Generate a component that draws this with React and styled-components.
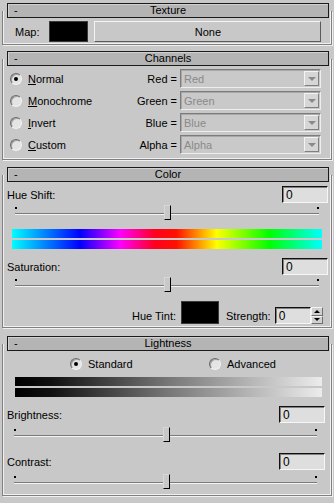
import React from "react";
import styled, { createGlobalStyle } from "styled-components";

const Global = createGlobalStyle`
  html, body {
    margin: 0;
    padding: 0;
    background: #c8c8c8;
  }
  body {
    font-family: "Liberation Sans", Arial, sans-serif;
    font-size: 11px;
    color: #000;
  }
  * { box-sizing: border-box; }
`;

// panel utama
const Page = styled.div`
  width: 334px;
  height: 503px;
  padding-top: 3px;
  background: #c8c8c8;
  overflow: hidden;
`;

const Rollout = styled.div`
  margin-top: ${(p) => p.$gap || 0}px;
`;

const Header = styled.div`
  position: relative;
  z-index: 1;
  height: 15px;
  margin: 0 5px 0 7px;
  border: 1px solid #1a1a1a;
  background: #b4b4b4;
  box-shadow: inset 1px 1px 0 #d0d0d0;
  display: flex;
  align-items: center;
  justify-content: center;
  line-height: 13px;
  font-size: 11px;
`;

const Minus = styled.span`
  position: absolute;
  left: 6px;
  top: 0;
`;

const Frame = styled.div`
  margin: -7px 2px 0 2px;
  padding: 7px 0 ${(p) => p.$pb || 0}px;
  border: 1px solid #808080;
  border-top: none;
  box-shadow: inset 1px 0 0 #f0f0f0, inset -1px -1px 0 #f0f0f0, 1px 1px 0 #f0f0f0;
`;

const Body = styled.div`
  padding: ${(p) => p.$pad || "0"};
`;

// baris map
const MapRow = styled.div`
  display: flex;
  align-items: center;
  height: 21px;
  padding-left: 12px;
`;

const Label = styled.span`
  white-space: nowrap;
  padding-bottom: ${(p) => p.$pb || 0}px;
  margin-left: ${(p) => p.$ml || 0}px;
`;

const Swatch = styled.div`
  width: ${(p) => p.$w}px;
  height: ${(p) => p.$h}px;
  background: #000;
  border: 1px solid #3a3a3a;
  margin-left: ${(p) => p.$ml || 0}px;
`;

const MapButton = styled.div`
  width: 227px;
  height: 21px;
  margin-left: 6px;
  background: #c8c8c8;
  border: 1px solid;
  border-color: #f4f4f4 #5a5a5a #5a5a5a #f4f4f4;
  display: flex;
  align-items: center;
  justify-content: center;
`;

// channels
const ChannelList = styled.div`
  display: flex;
  flex-direction: column;
  gap: 3px;
  padding: 3px 0 0;
`;

const ChannelRow = styled.div`
  display: flex;
  align-items: center;
  height: 19px;
  padding-left: 7px;
`;

const RadioWrap = styled.label`
  display: flex;
  align-items: center;
  gap: ${(p) => p.$gap || 6}px;
  width: ${(p) => (p.$w ? p.$w + "px" : "auto")};
  margin-left: ${(p) => p.$ml || 0}px;
  white-space: nowrap;
  u { text-decoration: underline; text-underline-offset: 1px; }
`;

const RadioDot = styled.span`
  width: 12px;
  height: 12px;
  border-radius: 50%;
  border: 1px solid;
  border-color: #6a6a6a #f2f2f2 #f2f2f2 #6a6a6a;
  background: #e4e4e4;
  box-shadow: inset 1px 1px 0 #a0a0a0;
  display: flex;
  align-items: center;
  justify-content: center;
  flex: none;
  &::after {
    content: "";
    width: 4px;
    height: 4px;
    border-radius: 50%;
    background: ${(p) => (p.$on ? "#000" : "transparent")};
  }
`;

const ChanLabel = styled.span`
  flex: 1;
  text-align: right;
  padding-right: 3px;
`;

const Dropdown = styled.div`
  width: 141px;
  height: 19px;
  margin-right: 10px;
  border: 1px solid;
  border-color: #7c7c7c #eeeeee #eeeeee #7c7c7c;
  box-shadow: inset 1px 1px 0 #a8a8a8;
  background: #c9c9c9;
  color: #8a8a8a;
  display: flex;
  align-items: center;
  justify-content: space-between;
  padding: 1px 1px 1px 3px;
`;

const DropArrow = styled.div`
  width: 15px;
  height: 15px;
  background: #d6d6d6;
  border: 1px solid;
  border-color: #f4f4f4 #808080 #808080 #f4f4f4;
  display: flex;
  align-items: center;
  justify-content: center;
  &::after {
    content: "";
    border-left: 4px solid transparent;
    border-right: 4px solid transparent;
    border-top: 4px solid #8a8a8a;
  }
`;

// baris label + angka
const FieldRow = styled.div`
  display: flex;
  align-items: center;
  justify-content: space-between;
  height: 17px;
  margin-top: ${(p) => p.$mt || 0}px;
  padding: 0 ${(p) => p.$pr || 4}px 0 4px;
`;

const NumBox = styled.div`
  width: ${(p) => p.$w || 46}px;
  height: ${(p) => p.$h || 17}px;
  border: 1px solid;
  border-color: #101010 #f6f6f6 #f6f6f6 #101010;
  box-shadow: inset 1px 1px 0 #808080;
  background: #dedede;
  padding-left: 3px;
  display: flex;
  align-items: center;
  font-size: 12px;
`;

const SliderWrap = styled.div`
  position: relative;
  height: ${(p) => p.$top + 8}px;
  padding-top: ${(p) => p.$top}px;
  margin: 0 ${(p) => p.$mr}px 0 ${(p) => p.$ml}px;
`;

const Track = styled.div`
  height: 2px;
  border-top: 1px solid #7a7a7a;
  border-bottom: 1px solid #f4f4f4;
`;

const Dot = styled.span`
  position: absolute;
  top: ${(p) => p.$top - 6}px;
  width: 2px;
  height: 2px;
  background: #000;
  ${(p) => (p.$right ? "right: 0;" : "left: 0;")}
`;

const Thumb = styled.span`
  position: absolute;
  top: ${(p) => p.$top - 8}px;
  width: 7px;
  height: 15px;
  margin-left: -3px;
  background: #c8c8c8;
  border: 1px solid;
  border-color: #d8d8d8 #000 #000 #d8d8d8;
`;

const Slider = ({ ml = 12, mr = 12, top = 10, value = 0.5 }) => (
  <SliderWrap $ml={ml} $mr={mr} $top={top}>
    <Dot $top={top} />
    <Dot $top={top} $right />
    <Track />
    <Thumb $top={top} style={{ left: `${value * 100}%` }} />
  </SliderWrap>
);

const GradBar = styled.div`
  height: ${(p) => p.$h}px;
  margin: ${(p) => p.$m};
  background: ${(p) => p.$bg};
`;

const hueGrad =
  "linear-gradient(to right, #00ffff 0%, #0000ff 22%, #ff00ff 35%, #ff0020 46%, #ff1000 53%, #ffff00 66%, #00ff00 83%, #00ffff 100%)";
const greyGrad = "linear-gradient(to right, #000 0%, #111 12%, #777 50%, #ececec 100%)";

const TintRow = styled.div`
  display: flex;
  align-items: flex-end;
  height: 23px;
  margin-top: 8px;
  padding-left: 129px;
`;

const Spinner = styled.div`
  display: flex;
  align-items: center;
  margin-left: 4px;
`;

const SpinBtns = styled.div`
  width: 12px;
  height: 17px;
  display: flex;
  flex-direction: column;
`;

const SpinBtn = styled.div`
  flex: 1;
  background: #d0d0d0;
  border: 1px solid;
  border-color: #f4f4f4 #707070 #707070 #f4f4f4;
  display: flex;
  align-items: center;
  justify-content: center;
  &::after {
    content: "";
    border-left: 3px solid transparent;
    border-right: 3px solid transparent;
    ${(p) => (p.$up ? "border-bottom: 3px solid #000;" : "border-top: 3px solid #000;")}
  }
`;

const ModeRow = styled.div`
  display: flex;
  align-items: center;
  height: 14px;
  margin-top: 6px;
`;

export default function App() {
  return (
    <Page>
      <Global />
      <Rollout>
        <Header>
          <Minus>-</Minus>Texture
        </Header>
        <Frame $pb={2}>
          <Body $pad="3px 0 0">
            <MapRow>
              <Label>Map:</Label>
              <Swatch $w={39} $h={21} $ml={10} />
              <MapButton>None</MapButton>
            </MapRow>
          </Body>
        </Frame>
      </Rollout>

      <Rollout $gap={6}>
        <Header>
          <Minus>-</Minus>Channels
        </Header>
        <Frame $pb={5}>
          <ChannelList>
            {[
              ["N", "ormal", "Red =", "Red", true],
              ["M", "onochrome", "Green =", "Green"],
              ["I", "nvert", "Blue =", "Blue"],
              ["C", "ustom", "Alpha =", "Alpha"],
            ].map(([u, rest, lab, val, on]) => (
              <ChannelRow key={val}>
                <RadioWrap $w={110}>
                  <RadioDot $on={on} />
                  <span>
                    <u>{u}</u>
                    {rest}
                  </span>
                </RadioWrap>
                <ChanLabel>{lab}</ChanLabel>
                <Dropdown>
                  <span>{val}</span>
                  <DropArrow />
                </Dropdown>
              </ChannelRow>
            ))}
          </ChannelList>
        </Frame>
      </Rollout>

      <Rollout $gap={7}>
        <Header>
          <Minus>-</Minus>Color
        </Header>
        <Frame $pb={3}>
          <FieldRow $mt={4} $pr={3}>
            <Label>Hue Shift:</Label>
            <NumBox>0</NumBox>
          </FieldRow>
          <Slider ml={12} mr={12} value={0.5} />
          <GradBar $h={9} $m="8px 9px 0 9px" $bg={hueGrad} />
          <GradBar $h={9} $m="2px 9px 0 9px" $bg={hueGrad} />
          <FieldRow $mt={9} $pr={3}>
            <Label>Saturation:</Label>
            <NumBox>0</NumBox>
          </FieldRow>
          <Slider ml={12} mr={12} value={0.5} />
          <TintRow>
            <Label $pb={2}>Hue Tint:</Label>
            <Swatch $w={38} $h={23} $ml={5} />
            <Label $pb={2} $ml={7}>Strength:</Label>
            <Spinner>
              <NumBox $w={36} $h={17}>0</NumBox>
              <SpinBtns>
                <SpinBtn $up />
                <SpinBtn />
              </SpinBtns>
            </Spinner>
          </TintRow>
        </Frame>
      </Rollout>

      <Rollout $gap={8}>
        <Header>
          <Minus>-</Minus>Lightness
        </Header>
        <Frame $pb={5}>
          <ModeRow>
            <RadioWrap $ml={67} $w={139}>
              <RadioDot $on />
              <span>Standard</span>
            </RadioWrap>
            <RadioWrap>
              <RadioDot />
              <span>Advanced</span>
            </RadioWrap>
          </ModeRow>
          <GradBar $h={9} $m="6px 9px 0 12px" $bg={greyGrad} />
          <GradBar $h={9} $m="2px 9px 0 12px" $bg={greyGrad} />
          <FieldRow $mt={9} $pr={6}>
            <Label>Brightness:</Label>
            <NumBox>0</NumBox>
          </FieldRow>
          <Slider ml={11} mr={14} top={12} value={0.5} />
          <FieldRow $mt={10} $pr={6}>
            <Label>Contrast:</Label>
            <NumBox>0</NumBox>
          </FieldRow>
          <Slider ml={11} mr={14} top={12} value={0.5} />
        </Frame>
      </Rollout>
    </Page>
  );
}
